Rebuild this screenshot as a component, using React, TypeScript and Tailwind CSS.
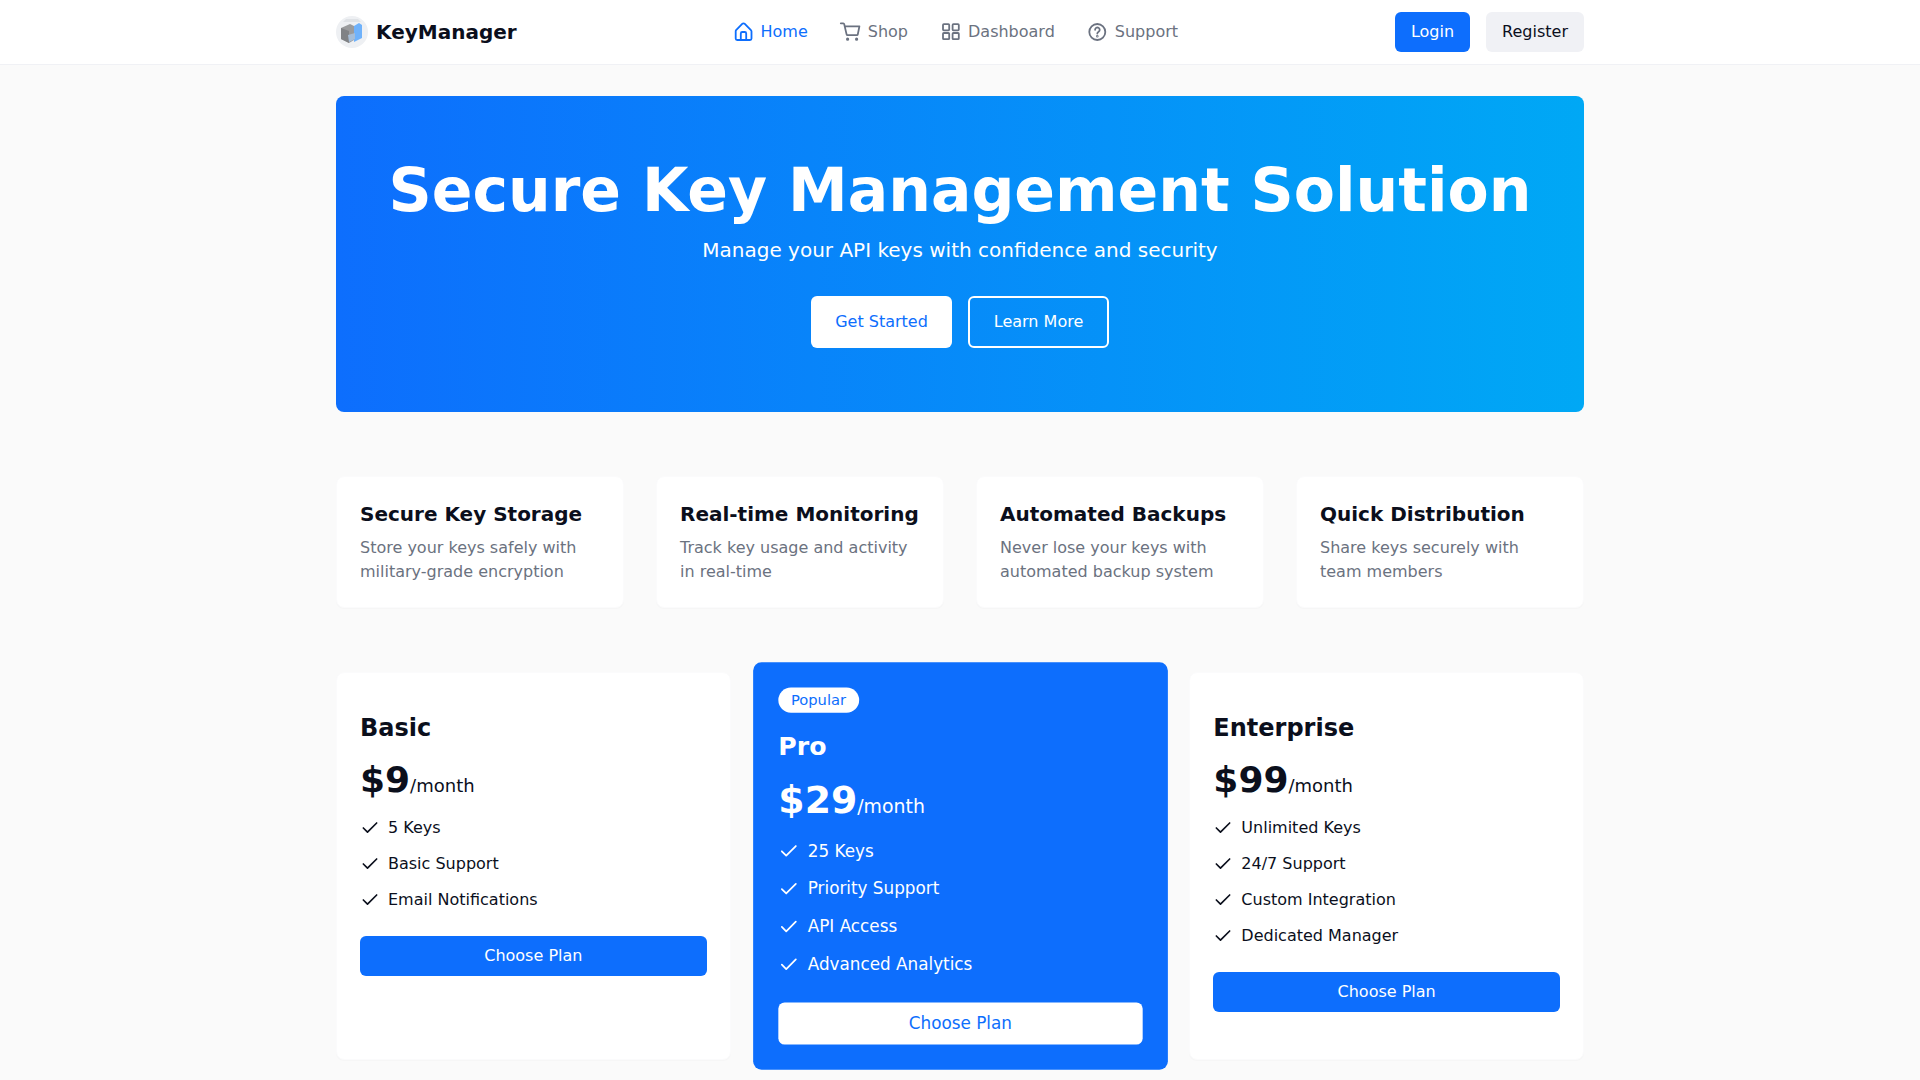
import { Check } from "lucide-react";

function Logo() {
  return (
    <svg width="32" height="32" viewBox="0 0 32 32" className="shrink-0">
      <circle cx="16" cy="16" r="16" fill="#eef0f3" />
      <path d="M10 3h12l3 3H7z" fill="#dfe2e6" />
      <path d="M5 12l9-4 4 2v14l-5 3-8-4z" fill="#9a9b9d" />
      <path d="M5 12l8 3v12l-8-4z" fill="#808285" />
      <path d="M18 10l5-3 3 2v13l-8 4z" fill="#6fb2fb" />
      <path d="M12 19l7-2v6l-6 3z" fill="#a6bdd6" />
    </svg>
  );
}

function Icon({ children }: { children: React.ReactNode }) {
  return (
    <svg width="24" height="24" viewBox="0 0 24 24" fill="none" stroke="currentColor" strokeWidth="1.8" strokeLinecap="round" strokeLinejoin="round" className="shrink-0">
      {children}
    </svg>
  );
}

function HomeIcon() {
  return (
    <Icon>
      <path d="M4.1 10.1 10.2 3.9a1.8 1.8 0 0 1 2.6 0l6.1 6.2a2 2 0 0 1 .6 1.4v7a1.5 1.5 0 0 1-1.5 1.5H5.2a1.5 1.5 0 0 1-1.5-1.5v-7a2 2 0 0 1 .4-1.4z" />
      <path d="M8.8 20v-6.5a1.5 1.5 0 0 1 1.5-1.5h2.4a1.5 1.5 0 0 1 1.5 1.5V20" />
    </Icon>
  );
}

function CartIcon() {
  return (
    <Icon>
      <path d="M1.8 3.3h2.4a1 1 0 0 1 1 .8L7.6 14.4a1 1 0 0 0 1 .8h9.2a1 1 0 0 0 1-.8l1.6-8H5.9" />
      <circle cx="8.6" cy="19.2" r="0.7" fill="currentColor" />
      <circle cx="17.6" cy="19.2" r="0.7" fill="currentColor" />
    </Icon>
  );
}

function GridIcon() {
  return (
    <Icon>
      <rect x="4" y="4.1" width="6.2" height="6.2" rx="0.8" />
      <rect x="13.6" y="4.1" width="6.2" height="6.2" rx="0.8" />
      <rect x="4" y="13" width="6.2" height="6.2" rx="0.8" />
      <rect x="13.6" y="13" width="6.2" height="6.2" rx="0.8" />
    </Icon>
  );
}

function HelpIcon() {
  return (
    <Icon>
      <circle cx="11.3" cy="12" r="8" />
      <path d="M9.1 9.8a2.3 2.3 0 1 1 3.5 2c-.8.5-1.3 1-1.3 1.8" />
      <circle cx="11.3" cy="16.2" r="0.4" fill="currentColor" />
    </Icon>
  );
}

function Feature({ title, desc }: { title: string; desc: string }) {
  return (
    <div className="bg-white rounded-lg border border-[#fbfbfc] shadow-[0_1px_1px_rgba(0,0,0,0.02)] p-[23px]">
      <h3 className="text-xl font-bold leading-[28px] text-[#0b0f1c] mb-2">{title}</h3>
      <p className="text-base leading-6 text-[#6b7280]">{desc}</p>
    </div>
  );
}

function Items({ items }: { items: string[] }) {
  return (
    <ul className="mt-0.5 mb-[18px]">
      {items.map((t) => (
        <li key={t} className="flex items-center gap-2 h-9 text-base">
          <Check size={20} strokeWidth={2} />
          <span>{t}</span>
        </li>
      ))}
    </ul>
  );
}

function Price({ price }: { price: string }) {
  return (
    <div className="flex items-baseline">
      <span className="text-[36px] font-bold leading-[56px]">{price}</span>
      <span className="text-lg">/month</span>
    </div>
  );
}

function Plan({ name, price, items }: { name: string; price: string; items: string[] }) {
  return (
    <div className="bg-white rounded-lg border border-[#fbfbfc] shadow-[0_1px_1px_rgba(0,0,0,0.02)] p-[23px] text-[#0b0f1c]">
      <h3 className="text-2xl font-bold leading-8 mt-4 mb-2">{name}</h3>
      <Price price={price} />
      <Items items={items} />
      <button className="w-full h-10 rounded-md bg-[#0d6efd] text-white text-base">Choose Plan</button>
    </div>
  );
}

function ProPlan() {
  return (
    <div className="bg-[#0d6efd] rounded-lg p-6 text-white scale-[1.05]">
      <span className="block w-fit h-6 bg-white text-[#0d6efd] rounded-full px-3 text-sm leading-6">Popular</span>
      <h3 className="text-2xl font-bold leading-8 mt-4 mb-2">Pro</h3>
      <Price price="$29" />
      <Items items={["25 Keys", "Priority Support", "API Access", "Advanced Analytics"]} />
      <button className="w-full h-10 rounded-md bg-white text-[#0d6efd] text-base">Choose Plan</button>
    </div>
  );
}

export default function App() {
  return (
    <div className="min-h-screen bg-[#fafafa] font-['DejaVu_Sans',sans-serif] text-[#0b0f1c]">
      <nav className="h-[65px] bg-white border-b border-[#f0f1f5]">
        <div className="w-[1248px] mx-auto h-16 flex items-center justify-between">
          <div className="flex items-center gap-2">
            <Logo />
            <span className="text-xl font-bold">KeyManager</span>
          </div>
          <div className="flex items-center gap-[31px] text-base text-[#6b7280] mr-[2px]">
            <a className="flex items-center gap-[5px] text-[#0d6efd]"><HomeIcon />Home</a>
            <a className="flex items-center gap-[5px]"><CartIcon />Shop</a>
            <a className="flex items-center gap-[5px]"><GridIcon />Dashboard</a>
            <a className="flex items-center gap-[5px]"><HelpIcon />Support</a>
          </div>
          <div className="flex items-center gap-4">
            <button className="h-10 px-4 rounded-md bg-[#0d6efd] text-white text-base">Login</button>
            <button className="h-10 px-4 rounded-md bg-[#f0f1f5] text-[#0b0f1c] text-base">Register</button>
          </div>
        </div>
      </nav>
      <main className="w-[1248px] mx-auto pt-[31px] pb-16">
        <section className="rounded-lg bg-[linear-gradient(90deg,#0d6efd,#00a8f5)] text-white flex flex-col items-center py-16">
          <h1 className="text-[60px] font-bold leading-[60px] mb-4">Secure Key Management Solution</h1>
          <p className="text-xl leading-7 mb-8">Manage your API keys with confidence and security</p>
          <div className="flex gap-4">
            <button className="h-[52px] w-[141px] rounded-md bg-white text-[#0d6efd] text-base">Get Started</button>
            <button className="h-[52px] w-[141px] rounded-md border-2 border-white text-white text-base">Learn More</button>
          </div>
        </section>
        <section className="grid grid-cols-4 gap-8 mt-16">
          <Feature title="Secure Key Storage" desc="Store your keys safely with military-grade encryption" />
          <Feature title="Real-time Monitoring" desc="Track key usage and activity in real-time" />
          <Feature title="Automated Backups" desc="Never lose your keys with automated backup system" />
          <Feature title="Quick Distribution" desc="Share keys securely with team members" />
        </section>
        <section className="grid grid-cols-3 gap-8 mt-16">
          <Plan name="Basic" price="$9" items={["5 Keys", "Basic Support", "Email Notifications"]} />
          <ProPlan />
          <Plan name="Enterprise" price="$99" items={["Unlimited Keys", "24/7 Support", "Custom Integration", "Dedicated Manager"]} />
        </section>
      </main>
    </div>
  );
}
